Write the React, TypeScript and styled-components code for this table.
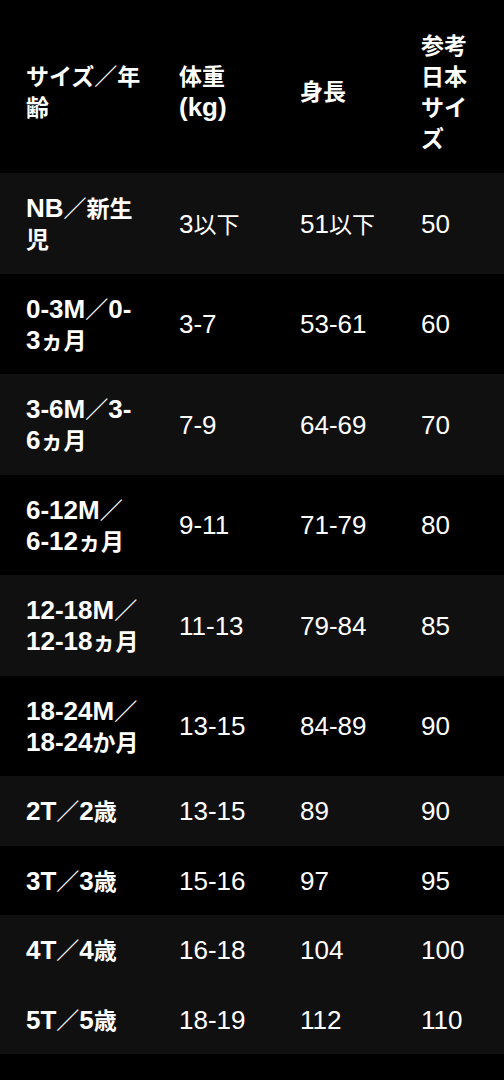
import React from "react";
import styled, { createGlobalStyle } from "styled-components";

const Global = createGlobalStyle`
  html, body {
    margin: 0;
    padding: 0;
    background: #000;
  }
  body {
    font-family: "Noto Sans CJK JP", "Noto Sans", sans-serif;
    color: #fff;
  }
`;

const Table = styled.table`
  width: 504px;
  table-layout: fixed;
  border-collapse: collapse;
  border-spacing: 0;
  font-family: "Noto Sans CJK JP", sans-serif;
  font-size: 23px;
  line-height: 31px;
  color: #fff;
`;

const Row = styled.tr<{ $shade: boolean }>`
  background: ${(p) => (p.$shade ? "#101010" : "#000")};
`;

const HeadCell = styled.th`
  padding: 28.5px 24px 20.5px 0;
  text-align: left;
  vertical-align: middle;
  font-weight: 700;
  &:first-child {
    padding-left: 26px;
  }
`;

const Cell = styled.td<{ $strong?: boolean }>`
  padding: 19.25px 24px 19.25px 0;
  text-align: left;
  vertical-align: middle;
  font-weight: ${(p) => (p.$strong ? 700 : 400)};
  &:first-child {
    padding-left: 26px;
  }
`;

const Line = styled.span`
  display: block;
  white-space: nowrap;
`;

const Latin = styled.span`
  font-family: "Liberation Sans", Arial, sans-serif;
  font-size: 26px;
  line-height: 0;
`;

function Mixed({ text }: { text: string }) {
  const parts = text.split(/([\x20-\x7E]+)/).filter(Boolean);
  return (
    <>
      {parts.map((p, i) =>
        /^[\x20-\x7E]+$/.test(p) ? (
          <Latin key={i}>{p}</Latin>
        ) : (
          <React.Fragment key={i}>{p}</React.Fragment>
        )
      )}
    </>
  );
}

function Lines({ lines }: { lines: string[] }) {
  return (
    <>
      {lines.map((l, i) => (
        <Line key={i}>
          <Mixed text={l} />
        </Line>
      ))}
    </>
  );
}

const header: string[][] = [
  ["サイズ／年", "齢"],
  ["体重", "(kg)"],
  ["身長"],
  ["参考", "日本", "サイ", "ズ"],
];

type RowData = { size: string[]; weight: string; height: string; jp: string; shade: boolean };

const rows: RowData[] = [
  { size: ["NB／新生", "児"], weight: "3以下", height: "51以下", jp: "50", shade: true },
  { size: ["0-3M／0-", "3ヵ月"], weight: "3-7", height: "53-61", jp: "60", shade: false },
  { size: ["3-6M／3-", "6ヵ月"], weight: "7-9", height: "64-69", jp: "70", shade: true },
  { size: ["6-12M／", "6-12ヵ月"], weight: "9-11", height: "71-79", jp: "80", shade: false },
  { size: ["12-18M／", "12-18ヵ月"], weight: "11-13", height: "79-84", jp: "85", shade: true },
  { size: ["18-24M／", "18-24か月"], weight: "13-15", height: "84-89", jp: "90", shade: false },
  { size: ["2T／2歳"], weight: "13-15", height: "89", jp: "90", shade: true },
  { size: ["3T／3歳"], weight: "15-16", height: "97", jp: "95", shade: false },
  { size: ["4T／4歳"], weight: "16-18", height: "104", jp: "100", shade: true },
  { size: ["5T／5歳"], weight: "18-19", height: "112", jp: "110", shade: true },
];

export default function App() {
  return (
    <>
      <Global />
      <Table>
        <colgroup>
          <col style={{ width: 179 }} />
          <col style={{ width: 121 }} />
          <col style={{ width: 121 }} />
          <col style={{ width: 83 }} />
        </colgroup>
        <thead>
          <Row $shade={false}>
            {header.map((h, i) => (
              <HeadCell key={i}>
                <Lines lines={h} />
              </HeadCell>
            ))}
          </Row>
        </thead>
        <tbody>
          {rows.map((r) => (
            <Row key={r.size.join("")} $shade={r.shade}>
              <Cell $strong>
                <Lines lines={r.size} />
              </Cell>
              <Cell>
                <Mixed text={r.weight} />
              </Cell>
              <Cell>
                <Mixed text={r.height} />
              </Cell>
              <Cell>
                <Mixed text={r.jp} />
              </Cell>
            </Row>
          ))}
        </tbody>
      </Table>
    </>
  );
}
